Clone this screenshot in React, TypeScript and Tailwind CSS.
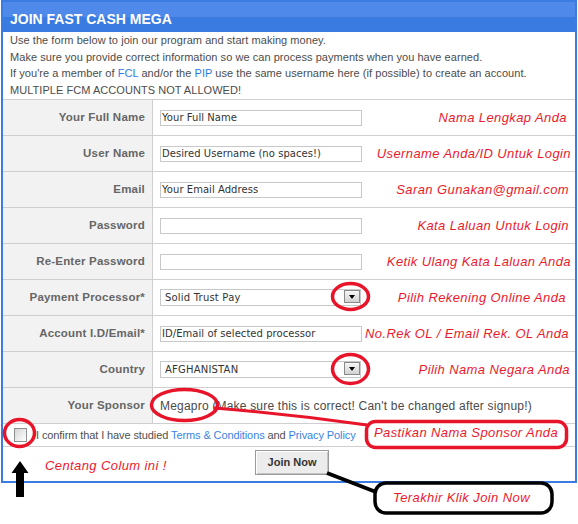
import React from "react";

const RED = "#e8142a";

type Row = {
  label: string;
  kind: "input" | "select" | "sponsor";
  value?: string;
  note?: string;
  pr?: string;
};

const rows: Row[] = [
  { label: "Your Full Name", kind: "input", value: "Your Full Name", note: "Nama Lengkap Anda", pr: "pr-[8px]" },
  { label: "User Name", kind: "input", value: "Desired Username (no spaces!)", note: "Username Anda/ID Untuk Login", pr: "pr-[4px]" },
  { label: "Email", kind: "input", value: "Your Email Address", note: "Saran Gunakan@gmail.com", pr: "pr-[6px]" },
  { label: "Password", kind: "input", value: "", note: "Kata Laluan Untuk Login", pr: "pr-[6px]" },
  { label: "Re-Enter Password", kind: "input", value: "", note: "Ketik Ulang Kata Laluan Anda", pr: "pr-[4px]" },
  { label: "Payment Processor*", kind: "select", value: "Solid Trust Pay", note: "Pilih Rekening Online Anda", pr: "pr-[9px]" },
  { label: "Account I.D/Email*", kind: "input", value: "ID/Email of selected processor", note: "No.Rek OL / Email Rek. OL Anda", pr: "pr-[6px]" },
  { label: "Country", kind: "select", value: "AFGHANISTAN", note: "Pilih Nama Negara Anda", pr: "pr-[5px]" },
  { label: "Your Sponsor", kind: "sponsor" },
];

function FakeSelect({ value }: { value: string }) {
  return (
    <div className="flex h-[17px] w-[201px] items-start justify-between border border-[#c8c8c8] bg-white">
      <span className="pl-[4px] font-['DejaVu_Sans',sans-serif] text-[10px] leading-[15px] tracking-[0.2px] text-[#333]">
        {value}
      </span>
      <div className="flex h-[13px] w-[16px] items-end justify-center border border-[#8a8a8a] bg-[linear-gradient(#f6f6f6,#d2d2d2)] pb-[3px]">
        <div className="h-0 w-0 border-x-[3.5px] border-t-[4px] border-x-transparent border-t-black" />
      </div>
    </div>
  );
}

export default function App() {
  return (
    <div className="relative h-[524px] w-[578px] overflow-hidden bg-white font-['Liberation_Sans',Arial,sans-serif]">
      <div className="ml-[1px] w-[576px] border-2 border-[#3a7ce2]">
        <div className="h-[30px] bg-[linear-gradient(#4f8aea_0%,#4f8aea_50%,#3a7be2_50%,#3a7be2_100%)] pl-[7px] pt-[7px] text-[14px] font-bold leading-[20px] text-white">
          JOIN FAST CASH MEGA
        </div>
        <div className="h-[67px] px-[7px] text-[11px] leading-[16.7px] tracking-[0.05px] text-[#4c4c4c]">
          <p>Use the form below to join our program and start making money.</p>
          <p>Make sure you provide correct information so we can process payments when you have earned.</p>
          <p>
            If you're a member of <span className="text-[#2f7be4]">FCL</span> and/or the{" "}
            <span className="text-[#2f7be4]">PIP</span> use the same username here (if possible) to create an account.
          </p>
          <p>MULTIPLE FCM ACCOUNTS NOT ALLOWED!</p>
        </div>

        {rows.map((r) => (
          <div key={r.label} className="flex h-[36px] border-t border-[#cfcfcf]">
            <div className="flex w-[150px] shrink-0 items-center justify-end border-r border-[#cfcfcf] bg-[#f2f2f2] pr-[7px] text-[11.5px] font-bold tracking-[0.2px] text-[#666]">
              {r.label}
            </div>
            <div className="flex flex-1 items-center pl-[7px]">
              {r.kind === "input" && (
                <input
                  readOnly
                  defaultValue={r.value}
                  className="h-[16px] w-[202px] border border-[#c8c8c8] bg-white pl-[1px] font-['DejaVu_Sans',sans-serif] text-[10px] tracking-[0.05px] text-[#333] outline-none"
                />
              )}
              {r.kind === "select" && <FakeSelect value={r.value ?? ""} />}
              {r.kind === "sponsor" && (
                <span className="text-[12px] tracking-[0.2px] text-[#4a4a4a]">
                  Megapro (Make sure this is correct! Can't be changed after signup!)
                </span>
              )}
              {r.note && (
                <span className={`ml-auto whitespace-nowrap text-[13px] italic tracking-[0.4px] text-[#ea1b2d] ${r.pr}`}>
                  {r.note}
                </span>
              )}
            </div>
          </div>
        ))}

        <div className="flex h-[23px] items-center border-t border-[#cfcfcf] pl-[11px]">
          <div className="h-[14px] w-[13px] border border-[#8e8f8f] bg-[linear-gradient(135deg,#d6d6d6,#ffffff)]" />
          <span className="ml-[9px] text-[11px] tracking-[-0.1px] text-[#505050]">
            I confirm that I have studied <span className="text-[#3a84e2]">Terms &amp; Conditions</span> and{" "}
            <span className="text-[#3a84e2]">Privacy Policy</span>
          </span>
        </div>

        <div className="flex h-[35px] justify-center border-t border-[#cfcfcf] pl-[6px] pt-[3px]">
          <button className="h-[25px] w-[74px] border border-[#9a9a9a] bg-[#ececec] text-[11px] font-bold text-[#333] shadow-[inset_1px_1px_0_#ffffff,inset_-1px_-1px_0_#c4c4c4]">
            Join Now
          </button>
        </div>
      </div>

      <svg className="pointer-events-none absolute left-0 top-0" width="578" height="524">
        <ellipse cx="350.5" cy="296.5" rx="18" ry="13" fill="none" stroke={RED} strokeWidth="3.5" />
        <ellipse cx="350.5" cy="369" rx="18" ry="14.5" fill="none" stroke={RED} strokeWidth="3.5" />
        <ellipse cx="184.5" cy="405" rx="33" ry="15.5" fill="none" stroke={RED} strokeWidth="3.5" />
        <path d="M214 408 Q290 414 367 425" fill="none" stroke={RED} strokeWidth="3" />
        <rect x="366.5" y="421.5" width="200" height="26" rx="9" fill="white" stroke={RED} strokeWidth="3.5" />
        <ellipse cx="19.5" cy="433" rx="15" ry="13.5" fill="none" stroke={RED} strokeWidth="3.5" />
        <path d="M20 461 L28.5 473 L24 473 L24 497 L16 497 L16 473 L11.5 473 Z" fill="black" />
        <line x1="327" y1="473" x2="376" y2="492" stroke="black" strokeWidth="4" />
        <rect x="375" y="483" width="177" height="30" rx="11" fill="white" stroke="black" strokeWidth="3.5" />
      </svg>

      <div className="absolute left-[374px] top-[425px] whitespace-nowrap text-[13px] italic leading-[16px] tracking-[0.4px] text-[#ea1b2d]">
        Pastikan Nama Sponsor Anda
      </div>
      <div className="absolute left-[45px] top-[458px] whitespace-nowrap text-[13px] italic leading-[16px] tracking-[0.4px] text-[#ea1b2d]">
        Centang Colum ini !
      </div>
      <div className="absolute left-[393px] top-[490px] whitespace-nowrap text-[13px] italic leading-[16px] tracking-[0.4px] text-[#ea1b2d]">
        Terakhir Klik Join Now
      </div>
    </div>
  );
}
